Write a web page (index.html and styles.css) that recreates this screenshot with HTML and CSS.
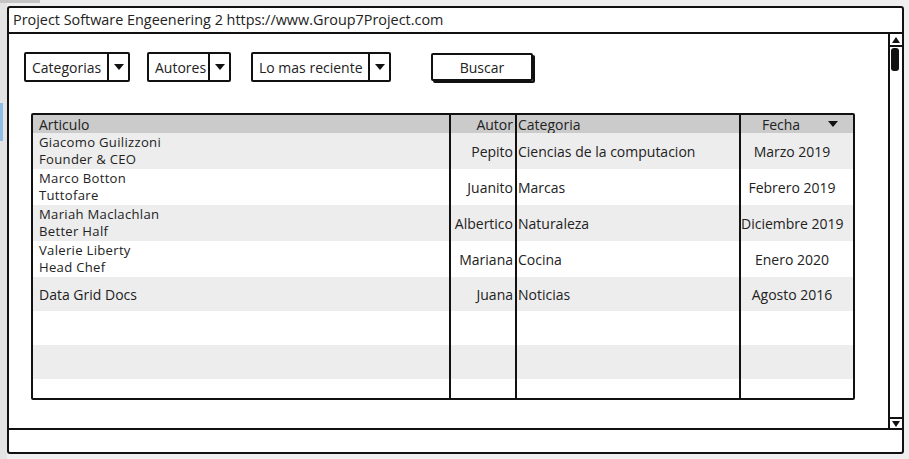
FILE: index.html
```html
<!DOCTYPE html>
<html lang="es">
<head>
<meta charset="utf-8">
<title>Project Software Engeenering 2</title>
<link rel="stylesheet" href="styles.css">
</head>
<body>
<div class="window">
  <div class="titlebar">Project Software Engeenering 2 https://www.Group7Project.com</div>
  <div class="content">
    <div class="main">
      <div class="toolbar">
        <div class="dropdown w-cat"><span class="dd-label">Categorias</span><span class="dd-arrow"><span class="tri-down"></span></span></div>
        <div class="dropdown w-aut"><span class="dd-label">Autores</span><span class="dd-arrow"><span class="tri-down"></span></span></div>
        <div class="dropdown w-rec"><span class="dd-label">Lo mas reciente</span><span class="dd-arrow"><span class="tri-down"></span></span></div>
        <div class="button">Buscar</div>
      </div>
      <div class="grid">
        <div class="row head">
          <div class="cell c1">Articulo</div>
          <div class="cell c2">Autor</div>
          <div class="cell c3">Categoria</div>
          <div class="cell c4 fecha-head"><span>Fecha</span><span class="tri-down"></span></div>
        </div>
        <div class="row tall odd">
          <div class="cell c1 two"><span>Giacomo Guilizzoni</span><span>Founder &amp; CEO</span></div>
          <div class="cell c2">Pepito</div>
          <div class="cell c3">Ciencias de la computacion</div>
          <div class="cell c4">Marzo 2019</div>
        </div>
        <div class="row tall">
          <div class="cell c1 two"><span>Marco Botton</span><span>Tuttofare</span></div>
          <div class="cell c2">Juanito</div>
          <div class="cell c3">Marcas</div>
          <div class="cell c4">Febrero 2019</div>
        </div>
        <div class="row tall odd">
          <div class="cell c1 two"><span>Mariah Maclachlan</span><span>Better Half</span></div>
          <div class="cell c2">Albertico</div>
          <div class="cell c3">Naturaleza</div>
          <div class="cell c4">Diciembre 2019</div>
        </div>
        <div class="row tall">
          <div class="cell c1 two"><span>Valerie Liberty</span><span>Head Chef</span></div>
          <div class="cell c2">Mariana</div>
          <div class="cell c3">Cocina</div>
          <div class="cell c4">Enero 2020</div>
        </div>
        <div class="row short odd">
          <div class="cell c1">Data Grid Docs</div>
          <div class="cell c2">Juana</div>
          <div class="cell c3">Noticias</div>
          <div class="cell c4">Agosto 2016</div>
        </div>
        <div class="row short">
          <div class="cell c1"></div><div class="cell c2"></div><div class="cell c3"></div><div class="cell c4"></div>
        </div>
        <div class="row short odd">
          <div class="cell c1"></div><div class="cell c2"></div><div class="cell c3"></div><div class="cell c4"></div>
        </div>
        <div class="row filler">
          <div class="cell c1"></div><div class="cell c2"></div><div class="cell c3"></div><div class="cell c4"></div>
        </div>
      </div>
    </div>
    <div class="scrollbar">
      <div class="sb-up"><span class="tri-up"></span></div>
      <div class="sb-thumb"></div>
      <div class="sb-track"></div>
      <div class="sb-down"><span class="tri-down small"></span></div>
    </div>
  </div>
  <div class="statusbar"></div>
</div>
</body>
</html>
```

FILE: styles.css
```css
* { box-sizing: border-box; }

html, body { height: 100%; }

body {
  margin: 0;
  padding: 6px 0 0 7px;
  font-family: "Open Sans", "Liberation Sans", sans-serif;
  font-size: 14px;
  line-height: 17px;
  color: #222;
  background:
    linear-gradient(#c4c4c4, #c4c4c4) 0 0 / 40px 3px no-repeat,
    linear-gradient(#8fbde8, #8fbde8) 0 103px / 3px 38px no-repeat,
    linear-gradient(#e4e4e4, #e4e4e4) 0 0 / 7px 100% no-repeat,
    #efefef;
}

.window {
  width: 897px;
  height: 448px;
  border: 2px solid #111;
  border-radius: 3px;
  background: #fff;
  display: flex;
  flex-direction: column;
}

.titlebar {
  height: 26px;
  border-bottom: 2px solid #111;
  padding: 3px 0 0 4px;
  font-size: 14.4px;
  white-space: nowrap;
}

.content {
  flex: 1;
  display: flex;
  min-height: 0;
}

.main {
  flex: 1;
  padding: 18px 0 0 15px;
}

.toolbar {
  display: flex;
  height: 30px;
}

.dropdown {
  display: flex;
  height: 30px;
  border: 2px solid #111;
  border-radius: 2px;
}
.w-cat { width: 106px; margin-right: 17px; }
.w-aut { width: 84px; margin-right: 20px; }
.w-rec { width: 140px; margin-right: 40px; }

.dd-label {
  flex: 1;
  padding: 5px 0 0 6px;
  white-space: nowrap;
}

.dd-arrow {
  width: 21px;
  border-left: 2px solid #111;
  display: flex;
  align-items: center;
  justify-content: center;
}

.tri-down {
  width: 0;
  height: 0;
  border-left: 5px solid transparent;
  border-right: 5px solid transparent;
  border-top: 6px solid #111;
}
.tri-down.small {
  border-left-width: 4px;
  border-right-width: 4px;
  border-top-width: 6px;
}
.tri-up {
  width: 0;
  height: 0;
  border-left: 4px solid transparent;
  border-right: 4px solid transparent;
  border-bottom: 6px solid #111;
}

.button {
  width: 102px;
  height: 28px;
  margin-top: 1px;
  border: 2px solid #111;
  border-radius: 2px;
  box-shadow: 2px 2px 0 #111;
  text-align: center;
  padding-top: 4px;
}

.grid {
  margin: 31px 0 0 7px;
  width: 824px;
  height: 287px;
  border: 2px solid #111;
  border-radius: 2px;
  display: flex;
  flex-direction: column;
}

.row {
  display: grid;
  grid-template-columns: 416px 66px 224px 114px;
}
.row.head { height: 18px; background: #cbcbcb; }
.row.tall { height: 36px; }
.row.short { height: 34px; }
.row.filler { flex: 1; }
.row.odd { background: #ededed; }

.cell {
  display: flex;
  flex-direction: column;
  justify-content: center;
  white-space: nowrap;
}
.cell.two {
  font-size: 13.1px;
  line-height: 17.5px;
  letter-spacing: 0.3px;
}
.c2, .c3, .c4 { border-left: 2px solid #111; }
.c1 { padding-left: 6px; }
.c2 { text-align: right; padding-right: 2px; }
.c3 { padding-left: 1px; }
.c4 { text-align: center; padding-right: 10px; }

.fecha-head {
  flex-direction: row;
  align-items: center;
  justify-content: center;
  gap: 28px;
  padding-right: 0;
  padding-left: 6px;
}

.scrollbar {
  width: 14px;
  border-left: 2px solid #111;
  display: flex;
  flex-direction: column;
  align-items: stretch;
}
.sb-up {
  height: 13px;
  border-bottom: 2px solid #111;
  display: flex;
  align-items: center;
  justify-content: center;
}
.sb-thumb {
  height: 23px;
  width: 8px;
  margin: 1px 0 0 1px;
  background: #111;
  border-radius: 3px;
}
.sb-track { flex: 1; }
.sb-down {
  height: 11px;
  border-top: 2px solid #111;
  display: flex;
  align-items: center;
  justify-content: center;
}

.statusbar {
  height: 24px;
  border-top: 2px solid #111;
}
```
